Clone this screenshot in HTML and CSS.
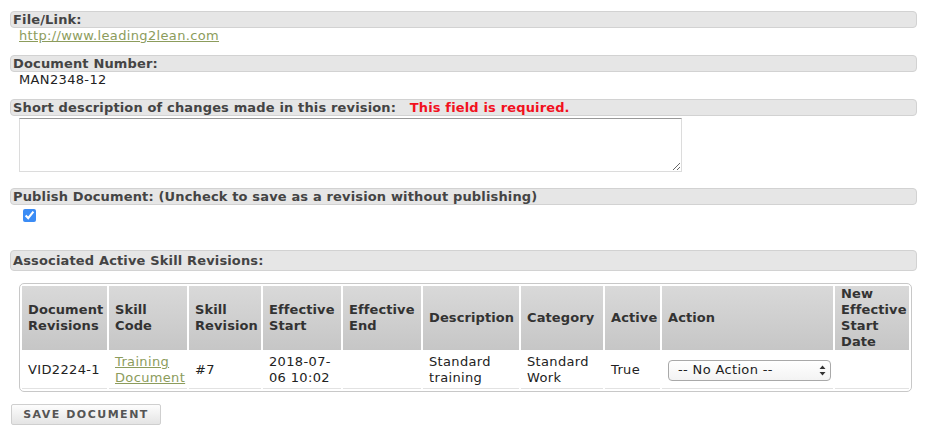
FILE: index.html
```html
<!DOCTYPE html>
<html>
<head>
<meta charset="utf-8">
<link rel="stylesheet" href="styles.css">
</head>
<body>
<div class="page">
  <div class="field">
    <div class="label">File/Link:</div>
    <div class="value"><a href="#">http://www.leading2lean.com</a></div>
  </div>
  <div class="field">
    <div class="label">Document Number:</div>
    <div class="value">MAN2348-12</div>
  </div>
  <div class="field field-area">
    <div class="label">Short description of changes made in this revision: <span class="error">This field is required.</span></div>
    <div class="value"><textarea class="area"></textarea></div>
  </div>
  <div class="field field-check">
    <div class="label">Publish Document: (Uncheck to save as a revision without publishing)</div>
    <div class="value"><input type="checkbox" class="check" checked></div>
  </div>
  <div class="field field-table">
    <div class="label label-tall">Associated Active Skill Revisions:</div>
    <div class="table-wrap">
      <table class="grid">
        <colgroup>
          <col style="width:85px"><col style="width:78px"><col style="width:72px"><col style="width:78px"><col style="width:78px"><col style="width:96px"><col style="width:82px"><col style="width:55px"><col style="width:171px"><col style="width:74px">
        </colgroup>
        <thead>
          <tr>
            <th>Document Revisions</th>
            <th>Skill Code</th>
            <th>Skill Revision</th>
            <th>Effective Start</th>
            <th>Effective End</th>
            <th>Description</th>
            <th>Category</th>
            <th>Active</th>
            <th>Action</th>
            <th>New Effective Start Date</th>
          </tr>
        </thead>
        <tbody>
          <tr>
            <td>VID2224-1</td>
            <td><a href="#">Training Document</a></td>
            <td>#7</td>
            <td>2018-07-<br>06 10:02</td>
            <td></td>
            <td>Standard training</td>
            <td>Standard Work</td>
            <td>True</td>
            <td><div class="select"><span>-- No Action --</span><svg class="arrows" width="7" height="11" viewBox="0 0 7 11"><path d="M3.5 0.5 L6.5 4 L0.5 4 Z M3.5 10.5 L6.5 7 L0.5 7 Z" fill="#333"/></svg></div></td>
            <td></td>
          </tr>
        </tbody>
      </table>
    </div>
  </div>
  <button class="btn">SAVE DOCUMENT</button>
</div>
</body>
</html>
```
FILE: styles.css
```css
body {
  margin: 0;
  font-family: Verdana, "DejaVu Sans", sans-serif;
  font-size: 13px;
  line-height: 16px;
  color: #222;
  background: #fff;
  letter-spacing: 0.35px;
}
.page {
  padding: 11px 10px 0 10px;
}
.field {
  margin-bottom: 11px;
}
.label {
  background: #e6e6e6;
  border: 1px solid #d2d2d2;
  border-radius: 4px;
  font-weight: bold;
  color: #444;
  padding: 0 2px;
  line-height: 15px;
  letter-spacing: 0.15px;
}
.label-tall {
  padding: 2px 2px;
}
.error {
  color: #f2111e;
  margin-left: 9px;
}
.value {
  padding-left: 9px;
  line-height: 16px;
}
a {
  color: #8c9c5c;
  text-decoration: underline;
}
.field-area .value {
  padding-top: 2px;
}
.area {
  display: block;
  box-sizing: border-box;
  width: 663px;
  height: 54px;
  margin: 0;
  border: 1px solid #dcdcdc;
  border-top-color: #999;
  resize: both;
  font-family: inherit;
}
.field-area {
  margin-bottom: 16px;
}
.field-check {
  margin-bottom: 25px;
}
.check {
  width: 13px;
  height: 13px;
  margin: 4px 3px 3px 4px;
  accent-color: #3b8cf5;
  vertical-align: top;
}
.table-wrap {
  margin: 12px 5px 0 9px;
  border: 1px solid #c8c8c8;
  border-radius: 5px;
}
.grid {
  width: 100%;
  table-layout: fixed;
  border-collapse: separate;
  border-spacing: 2px;
}
.grid th {
  background: linear-gradient(#d9d9d9, #c6c6c6);
  color: #333;
  font-weight: bold;
  text-align: left;
  padding: 0 6px;
  height: 64px;
  vertical-align: middle;
  letter-spacing: 0.1px;
}
.grid td {
  padding: 2px 6px;
  border-bottom: 1px solid #e2e2e2;
  vertical-align: middle;
  color: #222;
}
.select {
  display: flex;
  align-items: center;
  justify-content: space-between;
  box-sizing: border-box;
  width: 163px;
  height: 21px;
  padding: 0 4px 0 9px;
  border: 1px solid #a9a9a9;
  border-radius: 4px;
  background: linear-gradient(#ffffff, #f3f3f3);
}
.arrows {
  display: block;
}
.btn {
  display: block;
  margin: 12px 0 0 1px;
  width: 150px;
  height: 21px;
  border: 1px solid #cfcfcf;
  border-radius: 2px;
  background: linear-gradient(#fdfdfd, #e4e4e4);
  font-family: Verdana, "DejaVu Sans", sans-serif;
  font-size: 11px;
  font-weight: bold;
  letter-spacing: 1.5px;
  color: #555;
  padding: 0;
}
```
